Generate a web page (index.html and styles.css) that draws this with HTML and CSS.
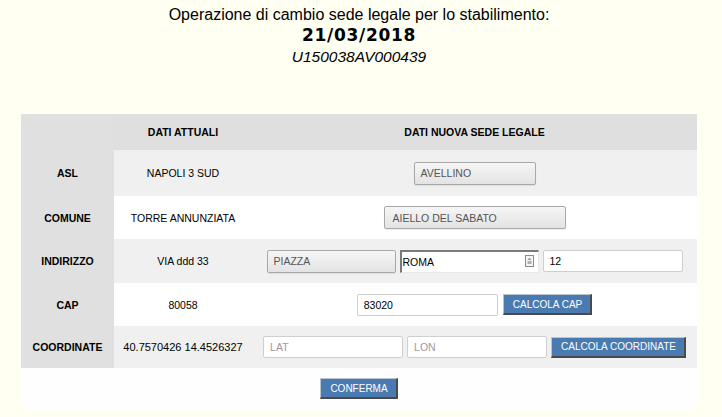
FILE: index.html
```html
<!DOCTYPE html>
<html lang="it">
<head>
<meta charset="utf-8">
<title>Cambio sede legale</title>
<link rel="stylesheet" href="styles.css">
</head>
<body>
<div class="page">
  <div class="title">
    <div class="t1">Operazione di cambio sede legale per lo stabilimento:</div>
    <div class="t2">21/03/2018</div>
    <div class="t3">U150038AV000439</div>
  </div>
  <div class="grid">
    <div class="hd lab"></div>
    <div class="hd">DATI ATTUALI</div>
    <div class="hd">DATI NUOVA SEDE LEGALE</div>

    <div class="lab">ASL</div>
    <div class="cur alt">NAPOLI 3 SUD</div>
    <div class="nw alt"><span class="inp dis w122">AVELLINO</span></div>

    <div class="lab">COMUNE</div>
    <div class="cur">TORRE ANNUNZIATA</div>
    <div class="nw"><span class="inp dis w182">AIELLO DEL SABATO</span></div>

    <div class="lab">INDIRIZZO</div>
    <div class="cur alt">VIA ddd 33</div>
    <div class="nw alt gap4">
      <span class="inp dis w129">PIAZZA</span>
      <span class="inp sel w139">ROMA
        <svg class="ico" width="9" height="12" viewBox="0 0 9 12"><rect x="0.5" y="0.5" width="8" height="11" fill="#f4f4f4" stroke="#8a8a8a"/><path d="M4.5 2.5 L6.5 5 L2.5 5 Z" fill="#9a9a9a"/><rect x="2.5" y="6" width="4" height="3" fill="#b0b0b0"/></svg>
      </span>
      <span class="inp txt w140">12</span>
    </div>

    <div class="lab">CAP</div>
    <div class="cur">80058</div>
    <div class="nw gap5">
      <span class="inp txt w141">83020</span>
      <span class="btn">CALCOLA CAP</span>
    </div>

    <div class="lab">COORDINATE</div>
    <div class="cur alt num">40.7570426 14.4526327</div>
    <div class="nw alt gap4">
      <span class="inp txt w140 ph">LAT</span>
      <span class="inp txt w140 ph">LON</span>
      <span class="btn">CALCOLA COORDINATE</span>
    </div>

    <div class="foot"><span class="btn">CONFERMA</span></div>
  </div>
</div>
</body>
</html>
```

FILE: styles.css
```css
html, body {
  margin: 0;
  padding: 0;
  background: #fffff2;
  font-family: "Liberation Sans", Arial, sans-serif;
  color: #000;
}
.page {
  width: 676px;
  margin-left: 21px;
}
.title {
  text-align: center;
  padding-top: 5px;
  height: 114px;
  box-sizing: border-box;
}
.t1 {
  font-size: 16px;
  line-height: 20px;
}
.t2 {
  font-family: "DejaVu Sans", sans-serif;
  font-weight: bold;
  font-size: 17px;
  letter-spacing: 0.7px;
  line-height: 20px;
  margin-top: 0px;
}
.t3 {
  font-style: italic;
  font-size: 15.5px;
  line-height: 20px;
  margin-top: 2px;
}
.grid {
  display: grid;
  grid-template-columns: 93px 138px 1fr;
  grid-template-rows: 36px 46px 43px 44px 43px 42px 41px;
  font-size: 10.5px;
  background: #ffffff;
}
.grid > div {
  display: flex;
  align-items: center;
  justify-content: center;
}
.hd {
  background: #dfdfdf;
  font-weight: bold;
}
.lab {
  background: #e0e0e0;
  font-weight: bold;
}
.alt {
  background: #f0f0f0;
}
.num {
  font-size: 11px;
}
.gap4 { gap: 4px; }
.gap5 { gap: 5px; }
.inp {
  box-sizing: border-box;
  height: 22px;
  display: flex;
  align-items: center;
  padding-left: 6px;
  border-radius: 2px;
  position: relative;
}
.dis {
  height: 23px;
  background: linear-gradient(#f6f6f6, #e3e3e3);
  border: 1px solid #a8a8a8;
  color: #555;
  box-shadow: 0 1px 1px rgba(0,0,0,0.08);
}
.txt {
  background: #fff;
  border: 1px solid #cfcfcf;
}
.ph { color: #9a9a9a; }
.sel {
  background: #fff;
  border-top: 2px solid #7a7a7a;
  border-left: 2px solid #7a7a7a;
  border-right: 1px solid #e8e8e8;
  border-bottom: 1px solid #e8e8e8;
  border-radius: 0;
  padding-left: 1px;
  height: 23px;
}
.ico {
  position: absolute;
  right: 4px;
  top: 3px;
}
.w122 { width: 122px; }
.w182 { width: 182px; padding-left: 8px; }
.w129 { width: 129px; }
.w139 { width: 139px; }
.w140 { width: 140px; }
.w141 { width: 141px; }
.btn {
  box-sizing: border-box;
  height: 21px;
  display: inline-flex;
  align-items: center;
  padding: 0 8px 0 9px;
  background: #4a7bb0;
  color: #fff;
  border-top: 1px solid #b8c4d0;
  border-left: 1px solid #b8c4d0;
  border-right: 2px solid #4a4a4a;
  border-bottom: 2px solid #4a4a4a;
  font-size: 10px;
}
.foot {
  grid-column: 1 / 4;
  background: #fefefe;
}
```
